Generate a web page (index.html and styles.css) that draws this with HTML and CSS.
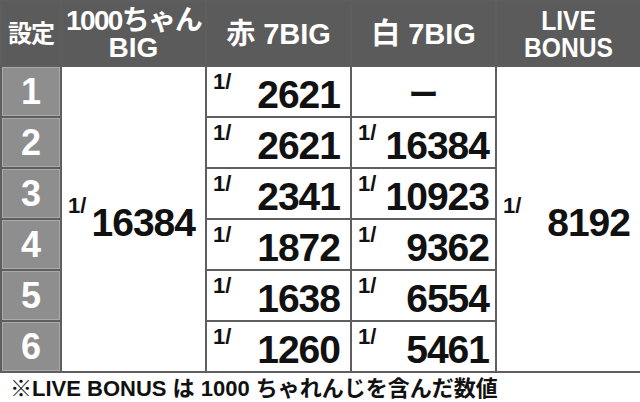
FILE: index.html
```html
<!DOCTYPE html>
<html lang="ja">
<head>
<meta charset="utf-8">
<link rel="stylesheet" href="styles.css">
</head>
<body>
<table class="tbl">
  <colgroup>
    <col class="c-set"><col class="c-w"><col class="c-w"><col class="c-w"><col class="c-w">
  </colgroup>
  <thead>
    <tr>
      <th class="h-set">設定</th>
      <th class="h-two"><span class="tight">1000ちゃん</span><br>BIG</th>
      <th>赤 7BIG</th>
      <th>白 7BIG</th>
      <th class="h-two"><span class="narrow">LIVE<br>BONUS</span></th>
    </tr>
  </thead>
  <tbody>
    <tr>
      <td class="set">1</td>
      <td rowspan="6" class="big"><div class="cell"><span class="frac">1/</span><span class="num">16384</span></div></td>
      <td><div class="cell"><span class="frac">1/</span><span class="num">2621</span></div></td>
      <td class="dash">ー</td>
      <td rowspan="6" class="big"><div class="cell"><span class="frac">1/</span><span class="num">8192</span></div></td>
    </tr>
    <tr>
      <td class="set">2</td>
      <td><div class="cell"><span class="frac">1/</span><span class="num">2621</span></div></td>
      <td><div class="cell w"><span class="frac">1/</span><span class="num">16384</span></div></td>
    </tr>
    <tr>
      <td class="set">3</td>
      <td><div class="cell"><span class="frac">1/</span><span class="num">2341</span></div></td>
      <td><div class="cell w"><span class="frac">1/</span><span class="num">10923</span></div></td>
    </tr>
    <tr>
      <td class="set">4</td>
      <td><div class="cell"><span class="frac">1/</span><span class="num">1872</span></div></td>
      <td><div class="cell w"><span class="frac">1/</span><span class="num">9362</span></div></td>
    </tr>
    <tr>
      <td class="set">5</td>
      <td><div class="cell"><span class="frac">1/</span><span class="num">1638</span></div></td>
      <td><div class="cell w"><span class="frac">1/</span><span class="num">6554</span></div></td>
    </tr>
    <tr>
      <td class="set">6</td>
      <td><div class="cell"><span class="frac">1/</span><span class="num">1260</span></div></td>
      <td><div class="cell w"><span class="frac">1/</span><span class="num">5461</span></div></td>
    </tr>
  </tbody>
</table>
<p class="note">※LIVE BONUS は 1000 ちゃれんじを含んだ数値</p>
</body>
</html>
```

FILE: styles.css
```css
html, body {
  margin: 0;
  padding: 0;
  background: #fff;
}
body {
  width: 640px;
  height: 402px;
  overflow: hidden;
  font-family: "Liberation Sans", "Noto Sans CJK JP", sans-serif;
  font-weight: bold;
  color: #111;
}
.tbl {
  width: 640px;
  border-collapse: collapse;
  table-layout: fixed;
}
.c-set { width: 60px; }
.c-w { width: 145px; }
.tbl th, .tbl td {
  border: 2px solid #5e5e5e;
  padding: 0;
}
.tbl th {
  height: 63px;
  background: #5b5b5b;
  color: #fff;
  font-size: 29px;
  line-height: 30px;
  text-align: center;
  vertical-align: middle;
  white-space: nowrap;
}
.tbl th.h-set {
  font-size: 24px;
  letter-spacing: -1px;
}
.tbl th.h-two {
  font-size: 28px;
  line-height: 27px;
}
.tight {
  letter-spacing: -1.6px;
}
.narrow {
  display: inline-block;
  transform: scaleX(0.88);
}
.tbl td {
  height: 49px;
  vertical-align: top;
}
.tbl td.set {
  background: #8e8e8e;
  color: #fff;
  font-size: 36px;
  text-align: center;
  vertical-align: middle;
  box-shadow: inset 0 0 0 1px #a9a9a9;
}
.tbl td.big {
  vertical-align: middle;
}
.tbl td.dash {
  text-align: center;
  vertical-align: middle;
  font-size: 30px;
}
.cell {
  display: flex;
  justify-content: space-between;
  align-items: flex-start;
  padding: 0 10px 0 6px;
}
.cell.w {
  padding-right: 6px;
}
.frac {
  font-size: 22px;
  line-height: 22px;
  margin-top: 4px;
}
.num {
  font-size: 39px;
  line-height: 39px;
  letter-spacing: -1px;
  margin-top: 8px;
}
.big .frac {
  margin-top: -2px;
}
.big .num {
  margin-top: 6px;
}
.note {
  margin: 2px 0 0 10px;
  font-size: 22px;
  line-height: 27px;
}
```
